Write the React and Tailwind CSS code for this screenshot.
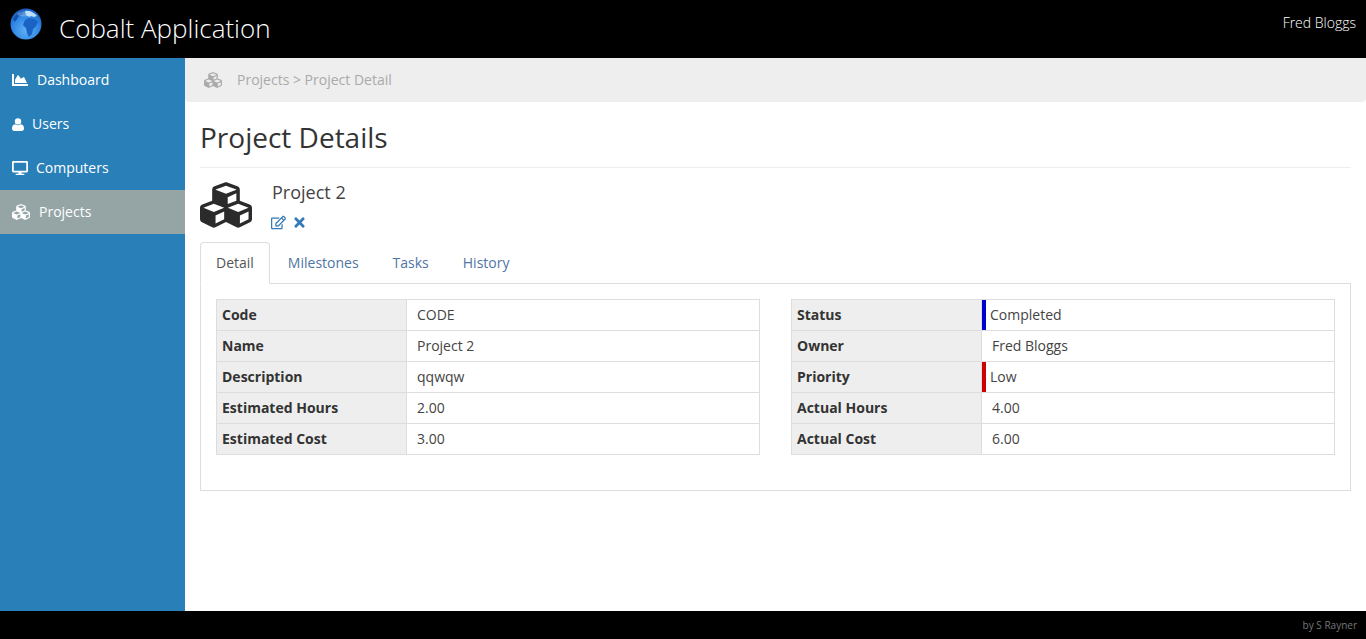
import React from "react";
import { FaChartArea, FaDesktop, FaCubes, FaRegEdit, FaTimes } from "react-icons/fa";

function Globe() {
  return (
    <svg width="32" height="32" viewBox="0 0 32 32">
      <defs>
        <radialGradient id="sea" cx="0.5" cy="0.7" r="0.75">
          <stop offset="0" stopColor="#5fb0f5" />
          <stop offset="0.6" stopColor="#2f86e4" />
          <stop offset="1" stopColor="#1350b0" />
        </radialGradient>
      </defs>
      <circle cx="16" cy="16" r="15.5" fill="url(#sea)" />
      <path d="M15 12l4-2 6 1 3 3-2 4-3 3-1 5-3 3-2-4-1-5-3-3z" fill="#1a62c4" />
      <path d="M3 11c2-4 5-7 9-8l1 3-4 2-2 3-2 3z" fill="#134fae" />
      <path d="M15 3c4-1 9 1 12 5l-3 1-3-1-2 1-3-2z" fill="#b9dcfa" />
      <ellipse cx="14" cy="6" rx="7" ry="2.5" fill="#d8eafc" opacity="0.3" />
    </svg>
  );
}

function UserIcon() {
  return (
    <svg width="12" height="13" viewBox="0 0 12 13" fill="currentColor">
      <circle cx="6" cy="3.4" r="3.2" />
      <path d="M3 6.2c.8.7 1.8 1 3 1s2.200-.3 3-1c1.800.3 3 1.600 3 4.300 0 1.500-1 2.500-2.300 2.500H2.300C1 13 0 12 0 10.500 0 7.800 1.200 6.500 3 6.200z" />
    </svg>
  );
}

function NavItem({ icon, label, gap, active }) {
  return (
    <div className={`flex items-center h-11 pl-3 text-white ${active ? "bg-[#95a5a6]" : ""}`}>
      {icon}
      <span className={gap}>{label}</span>
    </div>
  );
}

function InfoRow({ label, value, bar }) {
  return (
    <div className="flex h-[31px] last:h-[30px] border-b border-[#dddddd] last:border-b-0">
      <div className="w-[190px] shrink-0 bg-[#eeeeee] border-r border-[#dddddd] pl-[5px] flex items-center font-bold text-[#333333]">
        {label}
      </div>
      <div className={`flex-1 flex items-center ${bar ? "" : "pl-[10px]"}`}>
        {bar && <div className={`w-1 h-full mr-[4px] ${bar}`}></div>}
        {value}
      </div>
    </div>
  );
}

function InfoTable({ rows }) {
  return (
    <div className="w-[544px] border border-[#dddddd] text-[#444444]">
      {rows.map((r) => (
        <InfoRow key={r.label} {...r} />
      ))}
    </div>
  );
}

const left = [
  { label: "Code", value: "CODE" },
  { label: "Name", value: "Project 2" },
  { label: "Description", value: "qqwqw" },
  { label: "Estimated Hours", value: "2.00" },
  { label: "Estimated Cost", value: "3.00" },
];

const right = [
  { label: "Status", value: "Completed", bar: "bg-[#0000cc]" },
  { label: "Owner", value: "Fred Bloggs" },
  { label: "Priority", value: "Low", bar: "bg-[#cc0000]" },
  { label: "Actual Hours", value: "4.00" },
  { label: "Actual Cost", value: "6.00" },
];

export default function App() {
  return (
    <div className="h-screen flex flex-col bg-white text-sm text-[#333333] font-['Open_Sans',sans-serif] overflow-hidden">
      <header className="h-[58px] shrink-0 bg-black text-white flex">
        <div className="pl-[10px] pt-[8px]">
          <Globe />
        </div>
        <div className="ml-[17px] mt-[10px] text-[26px] leading-9 font-light">Cobalt Application</div>
        <div className="ml-auto mr-[10px] mt-[13px] leading-5 font-light">Fred Bloggs</div>
      </header>

      <div className="flex-1 flex min-h-0">
        <nav className="w-[185px] shrink-0 bg-[#2980b9]">
          <NavItem icon={<FaChartArea size={16} />} label="Dashboard" gap="ml-[9px]" />
          <NavItem icon={<UserIcon />} label="Users" gap="ml-[8px]" />
          <NavItem icon={<FaDesktop size={16} />} label="Computers" gap="ml-[8px]" />
          <NavItem icon={<FaCubes size={18} />} label="Projects" gap="ml-[9px]" active />
        </nav>

        <main className="flex-1 min-w-0">
          <div className="h-11 bg-[#eeeeee] rounded-b flex items-center pl-[19px] text-[#aaaaaa]">
            <FaCubes size={18} />
            <span className="ml-[15px]">Projects &gt; Project Detail</span>
          </div>

          <div className="px-[15px]">
            <h1 className="mt-[16px] pb-[11px] text-[28px] leading-[38px] text-[#333333] border-b border-[#eeeeee]">
              Project Details
            </h1>

            <div className="flex mt-[14px] h-[61px]">
              <FaCubes size={52} className="text-[#2b2b2b] -mt-[3px]" />
              <div className="ml-[20px]">
                <div className="text-lg leading-[20px] text-[#444444]">Project 2</div>
                <div className="flex items-center gap-[6px] -ml-[1px] mt-[13px] text-[#337ab7]">
                  <FaRegEdit size={15} />
                  <FaTimes size={15} />
                </div>
              </div>
            </div>

            <div className="flex h-[42px] -mt-[1px] border-b border-[#dddddd] text-[#4f75a3]">
              <div className="h-[42px] px-[15px] flex items-center bg-white border border-[#dddddd] border-b-white rounded-t text-[#555555]">
                Detail
              </div>
              <div className="px-[18px] flex items-center">Milestones</div>
              <div className="px-[16px] flex items-center">Tasks</div>
              <div className="px-[18px] flex items-center">History</div>
            </div>

            <div className="h-[207px] border border-t-0 border-[#dddddd] pt-[15px] px-[15px] flex items-start justify-between">
              <InfoTable rows={left} />
              <InfoTable rows={right} />
            </div>
          </div>
        </main>
      </div>

      <footer className="h-[28px] shrink-0 bg-black flex items-center justify-end pr-[9px] text-[10px] text-[#777777]">
        by S Rayner
      </footer>
    </div>
  );
}
